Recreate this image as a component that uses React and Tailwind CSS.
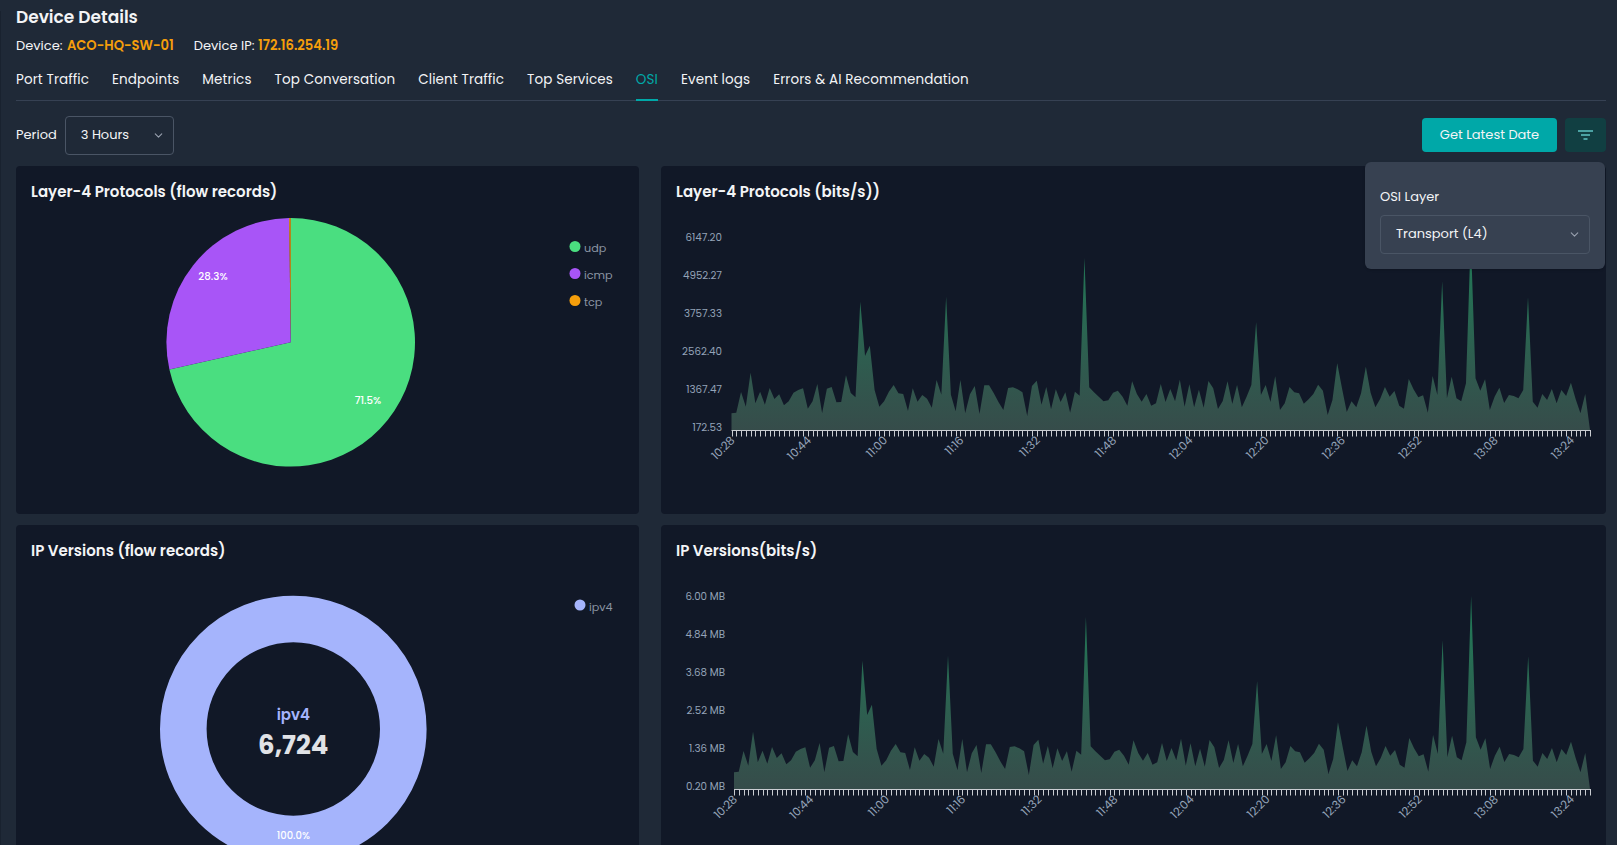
import React from "react";
import { ChevronDown } from "lucide-react";

const A = [640,638,576,620,518,610,575,614,564,597,583,616,604,578,570,565,626,604,552,640,566,561,607,606,526,579,592,311,468,437,570,620,604,575,555,580,582,633,565,605,585,596,623,540,584,296,584,634,540,640,583,558,642,556,556,580,607,630,564,562,568,577,648,558,542,614,561,628,568,606,577,638,575,587,180,562,577,590,604,601,578,572,590,617,544];
const B = [462,485,462,497,490,432,486,447,484,419,500,433,502,449,503,423,445,507,483,424,492,435,502,470,435,253,465,435,486,409,510,490,441,457,460,491,478,462,434,452,525,480,370,445,516,484,502,460,380,458,502,477,441,470,453,497,506,417,448,472,466,518,408,465,130,475,410,475,484,430,-3,415,452,418,510,470,443,489,465,468,475,450,178,485,503,462,480,447,490,450,468,428,478,520,462,570];
const heights = [...A.map((v) => (690 - v) / 3), ...B.map((v) => (570 - v) / 3)].map((h) => (h > 90 ? h + 2 : h));

const tabs = ["Port Traffic", "Endpoints", "Metrics", "Top Conversation", "Client Traffic", "Top Services", "OSI", "Event logs", "Errors & AI Recommendation"];
const times = ["10:28", "10:44", "11:00", "11:16", "11:32", "11:48", "12:04", "12:20", "12:36", "12:52", "13:08", "13:24"];
const font = "Poppins, Inter, sans-serif";

function AreaChart({ id, viewBox, height, x0, x1, base, yLabels, yEnd, yStart }) {
  const n = heights.length;
  const step = (x1 - x0) / (n - 1);
  const pts = heights.map((h, i) => `${(x0 + i * step).toFixed(2)},${(base - h).toFixed(2)}`);
  const d = `M${x0},${base} L${pts.join(" L")} L${x1},${base} Z`;
  return (
    <svg viewBox={viewBox} width="945" height={height} className="block" style={{ fontFamily: font }}>
      <defs>
        <linearGradient id={id} gradientUnits="userSpaceOnUse" x1="0" y1={base - 200} x2="0" y2={base}>
          <stop offset="0" stopColor="#1f7f58" />
          <stop offset="0.72" stopColor="#30594e" />
          <stop offset="1" stopColor="#364c4a" />
        </linearGradient>
      </defs>
      <path d={d} fill={`url(#${id})`} />
      <line x1={x0} x2={x1 + 0.5} y1={base + 0.5} y2={base + 0.5} stroke="#c9ccd1" />
      {Array.from({ length: n }, (_, i) => {
        const x = Math.round(x0 + i * step) + 0.5;
        return <line key={i} x1={x} x2={x} y1={base} y2={base + 6.5} stroke="#c9ccd1" />;
      })}
      {yLabels.map((t, i) => (
        <text key={t} x={yEnd} y={yStart + i * 38 + 4} textAnchor="end" fontSize="10.3" fill="#94a3b8">
          {t}
        </text>
      ))}
      {times.map((t, i) => {
        const x = x0 + i * 16 * step + 4;
        const y = base + 11;
        return (
          <text key={t} x={x} y={y} textAnchor="end" fontSize="11.5" fill="#94a3b8" transform={`rotate(-45 ${x} ${y})`}>
            {t}
          </text>
        );
      })}
    </svg>
  );
}

function polar(cx, cy, r, deg) {
  const a = ((deg - 90) * Math.PI) / 180;
  return [cx + r * Math.cos(a), cy + r * Math.sin(a)];
}
function slice(cx, cy, r, a0, a1) {
  const [x0, y0] = polar(cx, cy, r, a0);
  const [x1, y1] = polar(cx, cy, r, a1);
  return `M${cx},${cy} L${x0},${y0} A${r},${r} 0 ${a1 - a0 > 180 ? 1 : 0} 1 ${x1},${y1} Z`;
}

function Legend({ x, y, color, label }) {
  return (
    <g>
      <circle cx={x} cy={y} r="5.5" fill={color} />
      <text x={x + 9} y={y + 5.5} fontSize="11.2" fill="#8b95a3">
        {label}
      </text>
    </g>
  );
}

function Pie() {
  const cx = 290.7;
  const cy = 342.3;
  const r = 124.3;
  return (
    <svg viewBox="16 204 623 309" width="623" height="309" className="block" style={{ fontFamily: font }}>
      <path d={slice(cx, cy, r, 0, 257.4)} fill="#4ade80" />
      <path d={slice(cx, cy, r, 257.4, 359.3)} fill="#a855f7" />
      <path d={slice(cx, cy, r, 359.3, 360)} fill="#f59e0b" />
      <text x="368" y="404" textAnchor="middle" fontSize="10.3" fontWeight="500" fill="#fff">71.5%</text>
      <text x="213" y="280" textAnchor="middle" fontSize="10.3" fontWeight="500" fill="#fff">28.3%</text>
      <Legend x={575} y={246.5} color="#4ade80" label="udp" />
      <Legend x={575} y={273.5} color="#a855f7" label="icmp" />
      <Legend x={575} y={300.5} color="#f59e0b" label="tcp" />
    </svg>
  );
}

function Donut() {
  const cx = 293.3;
  const cy = 729;
  return (
    <svg viewBox="16 563 623 300" width="623" height="300" className="block" style={{ fontFamily: font }}>
      <circle cx={cx} cy={cy} r="110" fill="none" stroke="#a5b4fc" strokeWidth="46.6" />
      <text x={cx} y="720" textAnchor="middle" fontSize="15" fontWeight="600" fill="#a5b4fc">ipv4</text>
      <text x={cx} y="754" textAnchor="middle" fontSize="26" fontWeight="700" fill="#e0e2e6">6,724</text>
      <text x={cx} y="839" textAnchor="middle" fontSize="10" fontWeight="500" fill="#fff">100.0%</text>
      <Legend x={580} y={605} color="#a5b4fc" label="ipv4" />
    </svg>
  );
}

function CardTitle({ children }) {
  return <h2 className="px-[15px] pt-[14px] text-[15px] leading-6 font-semibold text-gray-100">{children}</h2>;
}

export default function App() {
  return (
    <div className="relative h-[845px] w-[1617px] overflow-hidden bg-[#1f2937] pl-4 pr-[11px] text-gray-100" style={{ fontFamily: font }}>
      <div className="absolute top-[11px] bottom-0 left-0 w-px bg-[#19222f]" />
      <h1 className="pt-[3px] text-[17px] leading-7 font-semibold">Device Details</h1>
      <div className="mt-[5px] flex gap-5 text-[13px] leading-5">
        <span>Device: <span className="ml-px text-[13.1px] font-semibold text-[#f59e0b]">ACO-HQ-SW-01</span></span>
        <span>Device IP: <span className="text-[13.1px] font-semibold text-[#f59e0b]">172.16.254.19</span></span>
      </div>
      <div className="mt-[14px] flex gap-[23px] border-b border-gray-700 text-[13.5px] leading-5 tracking-[0.1px]">
        {tabs.map((t) => (
          <div key={t} className={t === "OSI" ? "-mb-px border-b-2 border-[#00a8a8] pb-[9px] text-[#00a8a8]" : "pb-[10px]"}>
            {t}
          </div>
        ))}
      </div>
      <div className="relative mt-[15px] flex h-[39px] items-start text-[13px]">
        <span className="mt-[9px]">Period</span>
        <div className="ml-2 flex h-[39px] w-[109px] items-center justify-between rounded border border-gray-600 pr-[8px] pb-[2px] pl-[15px]">
          3 Hours
          <ChevronDown size={13} className="mt-[2px] text-gray-400" />
        </div>
        <div className="mt-[2px] ml-auto flex h-[34px] w-[135px] items-center justify-center rounded bg-[#00a8a8] pb-[1px] text-gray-100">
          Get Latest Date
        </div>
        <div className="mt-[2px] ml-2 flex h-[34px] w-[41px] items-center justify-center rounded bg-[#113f42]">
          <svg width="15" height="10" viewBox="0 0 15 10" fill="none" stroke="#5fc4c4" strokeWidth="1.5">
            <path d="M0 1h15M3 5h9M5.5 9h4" />
          </svg>
        </div>
        <div className="absolute top-[46px] right-px z-10 h-[107px] w-[240px] rounded-md bg-[#374151] px-[15px] pt-[25px] shadow">
          <div className="leading-5">OSI Layer</div>
          <div className="mt-[8px] flex h-[39px] items-center justify-between rounded border border-gray-600 pr-[8px] pb-[2px] pl-[15px]">
            Transport (L4)
            <ChevronDown size={13} className="mt-[2px] text-gray-400" />
          </div>
        </div>
      </div>
      <div className="mt-[11px] grid grid-cols-[623px_945px] gap-x-[22px] gap-y-[11px]">
        <div className="h-[348px] rounded bg-[#111827]">
          <CardTitle>Layer-4 Protocols (flow records)</CardTitle>
          <Pie />
        </div>
        <div className="h-[348px] rounded bg-[#111827]">
          <CardTitle>Layer-4 Protocols (bits/s))</CardTitle>
          <AreaChart id="g1" viewBox="661 204 945 309" height="309" x0={731.5} x1={1590} base={430} yEnd={722} yStart={237.3}
            yLabels={["6147.20", "4952.27", "3757.33", "2562.40", "1367.47", "172.53"]} />
        </div>
        <div className="h-[347px] rounded bg-[#111827]">
          <CardTitle>IP Versions (flow records)</CardTitle>
          <Donut />
        </div>
        <div className="h-[347px] rounded bg-[#111827]">
          <CardTitle>IP Versions(bits/s)</CardTitle>
          <AreaChart id="g2" viewBox="661 563 945 300" height="300" x0={734} x1={1590} base={789} yEnd={725} yStart={596.3}
            yLabels={["6.00 MB", "4.84 MB", "3.68 MB", "2.52 MB", "1.36 MB", "0.20 MB"]} />
        </div>
      </div>
    </div>
  );
}
